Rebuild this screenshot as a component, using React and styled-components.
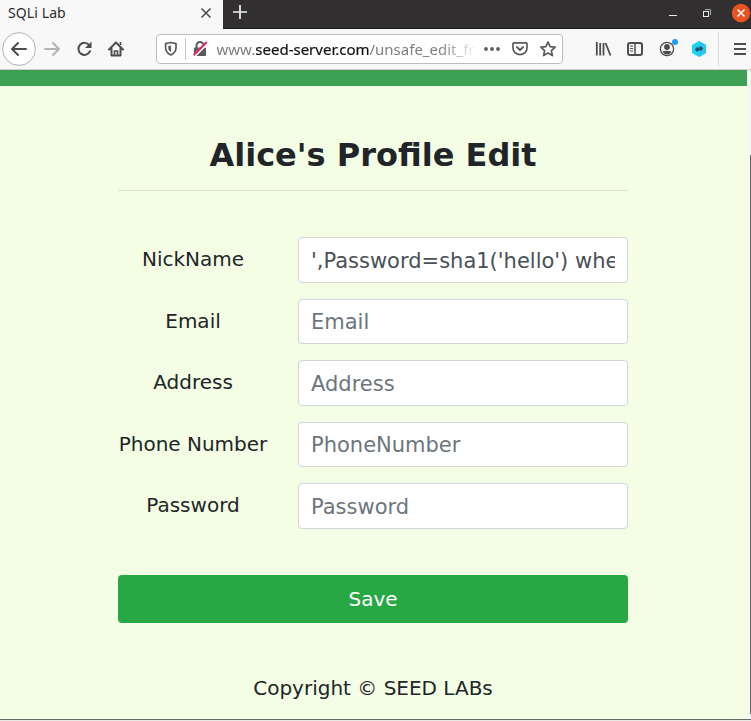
import React from 'react';
import styled, { createGlobalStyle } from 'styled-components';

const Global = createGlobalStyle`
  *, *::before, *::after { box-sizing: border-box; }
  html, body { margin: 0; padding: 0; overflow: hidden; }
  svg { display: block; flex: none; }
`;

const Window = styled.div`
  width: 751px;
  height: 721px;
  display: flex;
  flex-direction: column;
  background: #f3fee4;
  overflow: hidden;
`;

const TabStrip = styled.div`
  flex: none;
  height: 29px;
  display: flex;
  background: #322f30;
  border-bottom: 1px solid #1c1b1e;
`;

const Tab = styled.div`
  width: 223px;
  height: 29px;
  display: flex;
  align-items: center;
  justify-content: space-between;
  padding: 0 11px 3px 8px;
  background: #f8f8f8;
  color: #2b2b2d;
  font: 14px/20px "Noto Sans", sans-serif;
`;

const TabTitle = styled.span`
  white-space: nowrap;
  letter-spacing: 0.1px;
`;

const NewTab = styled.div`
  flex: 1;
  padding: 4px 0 0 9px;
`;

const WindowControls = styled.div`
  display: flex;
  align-items: flex-start;
  width: 83px;
`;

const Toolbar = styled.div`
  flex: none;
  height: 41px;
  display: flex;
  align-items: center;
  background: #f8f8f8;
  border-bottom: 1px solid #cfcfd1;
`;

const NavButtons = styled.div`
  width: 156px;
  height: 40px;
`;

const AddressBar = styled.div`
  width: 407px;
  height: 30px;
  display: flex;
  align-items: center;
  background: #fff;
  border: 1px solid #bdbdbf;
  border-radius: 4px;
`;

const Url = styled.div`
  width: 262px;
  overflow: hidden;
  white-space: nowrap;
  color: #7d7d80;
  font: 15px/26px "Noto Sans", sans-serif;
  text-indent: -0.5px;
  mask-image: linear-gradient(to right, #000 222px, transparent 261px);
`;

const Domain = styled.span`
  color: #101012;
  -webkit-text-stroke: 0.2px #101012;
`;

const Page = styled.div`
  flex: none;
  height: 649px;
  display: flex;
`;

const Content = styled.main`
  width: 747px;
  font-family: "DejaVu Sans", sans-serif;
  color: #212529;
`;

const SiteBar = styled.div`
  height: 16px;
  background: #3ea055;
`;

const Scrollbar = styled.div`
  flex: 1;
  background: #f5f7f2;
  display: flex;
  justify-content: flex-end;
`;

const ScrollThumb = styled.div`
  width: 1px;
  height: 559px;
  margin-top: 85px;
  background: #6c6c6c;
`;

const WindowEdge = styled.div`
  height: 2px;
  border-top: 1px solid #686a66;
  background: #e8e8e6;
`;

const Form = styled.form`
  width: 510px;
  margin: 0 0 0 118px;
  display: flex;
  flex-direction: column;
`;

const Title = styled.h1`
  margin: 0;
  padding-top: 49px;
  height: 105px;
  text-align: center;
  font: bold 32px/40px "DejaVu Sans", sans-serif;
  white-space: nowrap;
  border-bottom: 1px solid #d9e4cc;
`;

const Fields = styled.div`
  margin-top: 46.3px;
  display: flex;
  flex-direction: column;
  gap: 16px;
`;

const Label = styled.label`
  width: 150px;
  margin-right: 30px;
  text-align: center;
  font-size: 20px;
  line-height: 44px;
  white-space: nowrap;
`;

const Input = styled.input`
  width: 330px;
  height: 45.5px;
  padding: 2px 12px 0;
  border: 1px solid #ced4da;
  border-radius: 4px;
  background: #fff;
  color: #495057;
  font: 21px "DejaVu Sans", sans-serif;
  outline: none;
  &::placeholder { color: #6c757d; opacity: 1; }
`;

const Field = styled.div`
  display: flex;
  height: 45.5px;
  &:nth-child(even) ${Input} { padding-top: 0; }
`;

const SaveButton = styled.button`
  width: 510px;
  height: 48px;
  margin-top: 46.2px;
  padding: 0;
  border: 0;
  border-radius: 4px;
  background: #28a745;
  color: #fff;
  font: 20px "DejaVu Sans", sans-serif;
`;

const Copyright = styled.p`
  margin: 50px 0 0;
  text-align: center;
  font-size: 20px;
  line-height: 30px;
`;

const fields = [
  { label: 'NickName', hint: 'NickName', value: "',Password=sha1('hello') where name='Boby';#" },
  { label: 'Email', hint: 'Email' },
  { label: 'Address', hint: 'Address' },
  { label: 'Phone Number', hint: 'PhoneNumber' },
  { label: 'Password', hint: 'Password' },
];

const NavIcons = () => (
  <svg width="156" height="40" fill="none" stroke="#4d4d4f" strokeWidth="2">
    <circle cx="19" cy="20" r="16.4" fill="#fff" stroke="#b1b1b3" strokeWidth="1" />
    <path d="M26 20H12M18 14l-6 6 6 6" strokeLinecap="round" strokeLinejoin="round" />
    <path d="M45 20H59M53 14l6 6-6 6" stroke="#b4b4b6" strokeLinecap="round" strokeLinejoin="round" />
    <path d="M89.3 16.3A6 6 0 1 0 90 22.2" strokeLinecap="round" />
    <path d="M91.5 12.5v6.5H85z" fill="#4d4d4f" stroke="none" />
    <path d="M109 20.5l7-7 7 7M111.5 19.5v7h9v-7" strokeLinecap="round" strokeLinejoin="round" />
    <path d="M114.5 27v-5h3v5M120.5 13v3" strokeWidth="1.6" />
  </svg>
);

const SecurityIcons = () => (
  <svg width="60" height="28" fill="none">
    <path d="M13.8 7.5c2 .8 3.2.8 5.2 1v4.5c0 3.5-2 5.4-5.2 7-3.2-1.6-5.2-3.5-5.2-7V8.5c2-.2 3.2-.2 5.200-1z" stroke="#5a5a5c" strokeWidth="1.7" strokeLinejoin="round" />
    <path d="M14 10.5v6.5c-1.8-1-2.7-2.3-2.7-4v-2z" fill="#5a5a5c" />
    <path d="M28.5 3v22" stroke="#c4c4c6" />
    <path d="M39.5 13V10.5a3.5 3.5 0 0 1 7 0V13" stroke="#5a5a5c" strokeWidth="2" />
    <rect x="37" y="12.5" width="12" height="8.5" rx="1" fill="#5a5a5c" />
    <path d="M37.5 20.5L50 8" stroke="#fff" strokeWidth="3.4" />
    <path d="M36.8 20L49.8 7" stroke="#d92256" strokeWidth="1.9" />
  </svg>
);

const PageActions = () => (
  <svg width="83" height="28" fill="none" stroke="#5a5a5c">
    <g fill="#5a5a5c" stroke="none">
      <circle cx="7" cy="14" r="1.9" /><circle cx="13" cy="14" r="1.9" /><circle cx="19" cy="14" r="1.9" />
    </g>
    <path d="M35 7.8h12q1 0 1 1V13a7 6.7 0 0 1-14 0V8.800q0-1 1-1z" strokeWidth="1.7" />
    <path d="M37.8 12l3.2 3 3.2-3" strokeWidth="1.8" strokeLinecap="round" strokeLinejoin="round" />
    <path d="M69 7l2.1 4.6 5 .6-3.7 3.4 1 5-4.4-2.5-4.4 2.500 1-5-3.7-3.4 5-.6z" strokeWidth="1.7" strokeLinejoin="round" />
  </svg>
);

const ToolbarActions = () => (
  <svg width="188" height="40" fill="none" stroke="#4d4d4f" strokeWidth="2">
    <path d="M33.8 13v13.5M37.2 14v12.5M40.5 14v12.5M42.5 14l5 12.5" strokeWidth="1.8" />
    <rect x="65" y="14" width="14" height="12" rx="2" />
    <path d="M72 14v12" strokeWidth="1.5" />
    <path d="M67 17h3M67 19.5h3M67 22h3" strokeWidth="1" />
    <circle cx="104" cy="20" r="6.6" strokeWidth="1.3" />
    <circle cx="104" cy="18" r="2.9" fill="#4d4d4f" stroke="none" />
    <path d="M99.5 22.5q4.5-1.5 9 0-1.5 3-4.5 3t-4.5-3z" fill="#4d4d4f" stroke="none" />
    <circle cx="112" cy="13" r="3" fill="#169ffa" stroke="none" />
    <path d="M136 12l7 4v8l-7 4-7-4v-8z" fill="#1bd5f0" stroke="none" />
    <path d="M136 12l7 4v8l-7 4z" fill="#2cc3f5" stroke="none" />
    <path d="M131.8 20.2l3-2.7v1.5l1.5-.5v3.5l-2 .2v1z" fill="#235169" stroke="none" />
    <path d="M140.2 19.8l-3 2.7v-1.5l-1 .3v-3.3l1.5-.2v-1z" fill="#235169" stroke="none" />
    <path d="M155.5 3v34" stroke="#dadadc" strokeWidth="1" />
    <path d="M171 15h12M171 20h12M171 25h12" strokeWidth="1.8" />
  </svg>
);

export default function App() {
  return (
    <Window>
      <Global />
      <TabStrip>
        <Tab>
          <TabTitle>SQLi Lab</TabTitle>
          <svg width="12" height="12" stroke="#4d4d4f" strokeWidth="1.6"><path d="M1.5 1.5l9 9M10.5 1.5l-9 9" /></svg>
        </Tab>
        <NewTab>
          <svg width="16" height="16" stroke="#f1f1f2" strokeWidth="1.7"><path d="M1 8h14M8 1v14" /></svg>
        </NewTab>
        <WindowControls>
          <svg width="83" height="28" fill="none" stroke="#eee">
            <path d="M1 15.5h8" />
            <rect x="35.5" y="11.5" width="5" height="5" />
            <path d="M37 9.5h5.5V15" stroke="#aaa" />
            <circle cx="73" cy="13" r="9.2" fill="#e95420" stroke="none" />
            <path d="M69.5 9.5l7 7M76.5 9.5l-7 7" stroke="#fff" strokeWidth="1.5" />
          </svg>
        </WindowControls>
      </TabStrip>
      <Toolbar>
        <NavButtons><NavIcons /></NavButtons>
        <AddressBar>
          <SecurityIcons />
          <Url>www.<Domain>seed-server.com</Domain>/unsafe_edit_fr</Url>
          <PageActions />
        </AddressBar>
        <ToolbarActions />
      </Toolbar>
      <Page>
        <Content>
          <SiteBar />
          <Form onSubmit={(e) => e.preventDefault()}>
            <Title>Alice's Profile Edit</Title>
            <Fields>
              {fields.map((f) => (
                <Field key={f.label}>
                  <Label>{f.label}</Label>
                  <Input placeholder={f.hint} defaultValue={f.value} />
                </Field>
              ))}
            </Fields>
            <SaveButton>Save</SaveButton>
            <Copyright>Copyright © SEED LABs</Copyright>
          </Form>
        </Content>
        <Scrollbar><ScrollThumb /></Scrollbar>
      </Page>
      <WindowEdge />
    </Window>
  );
}
